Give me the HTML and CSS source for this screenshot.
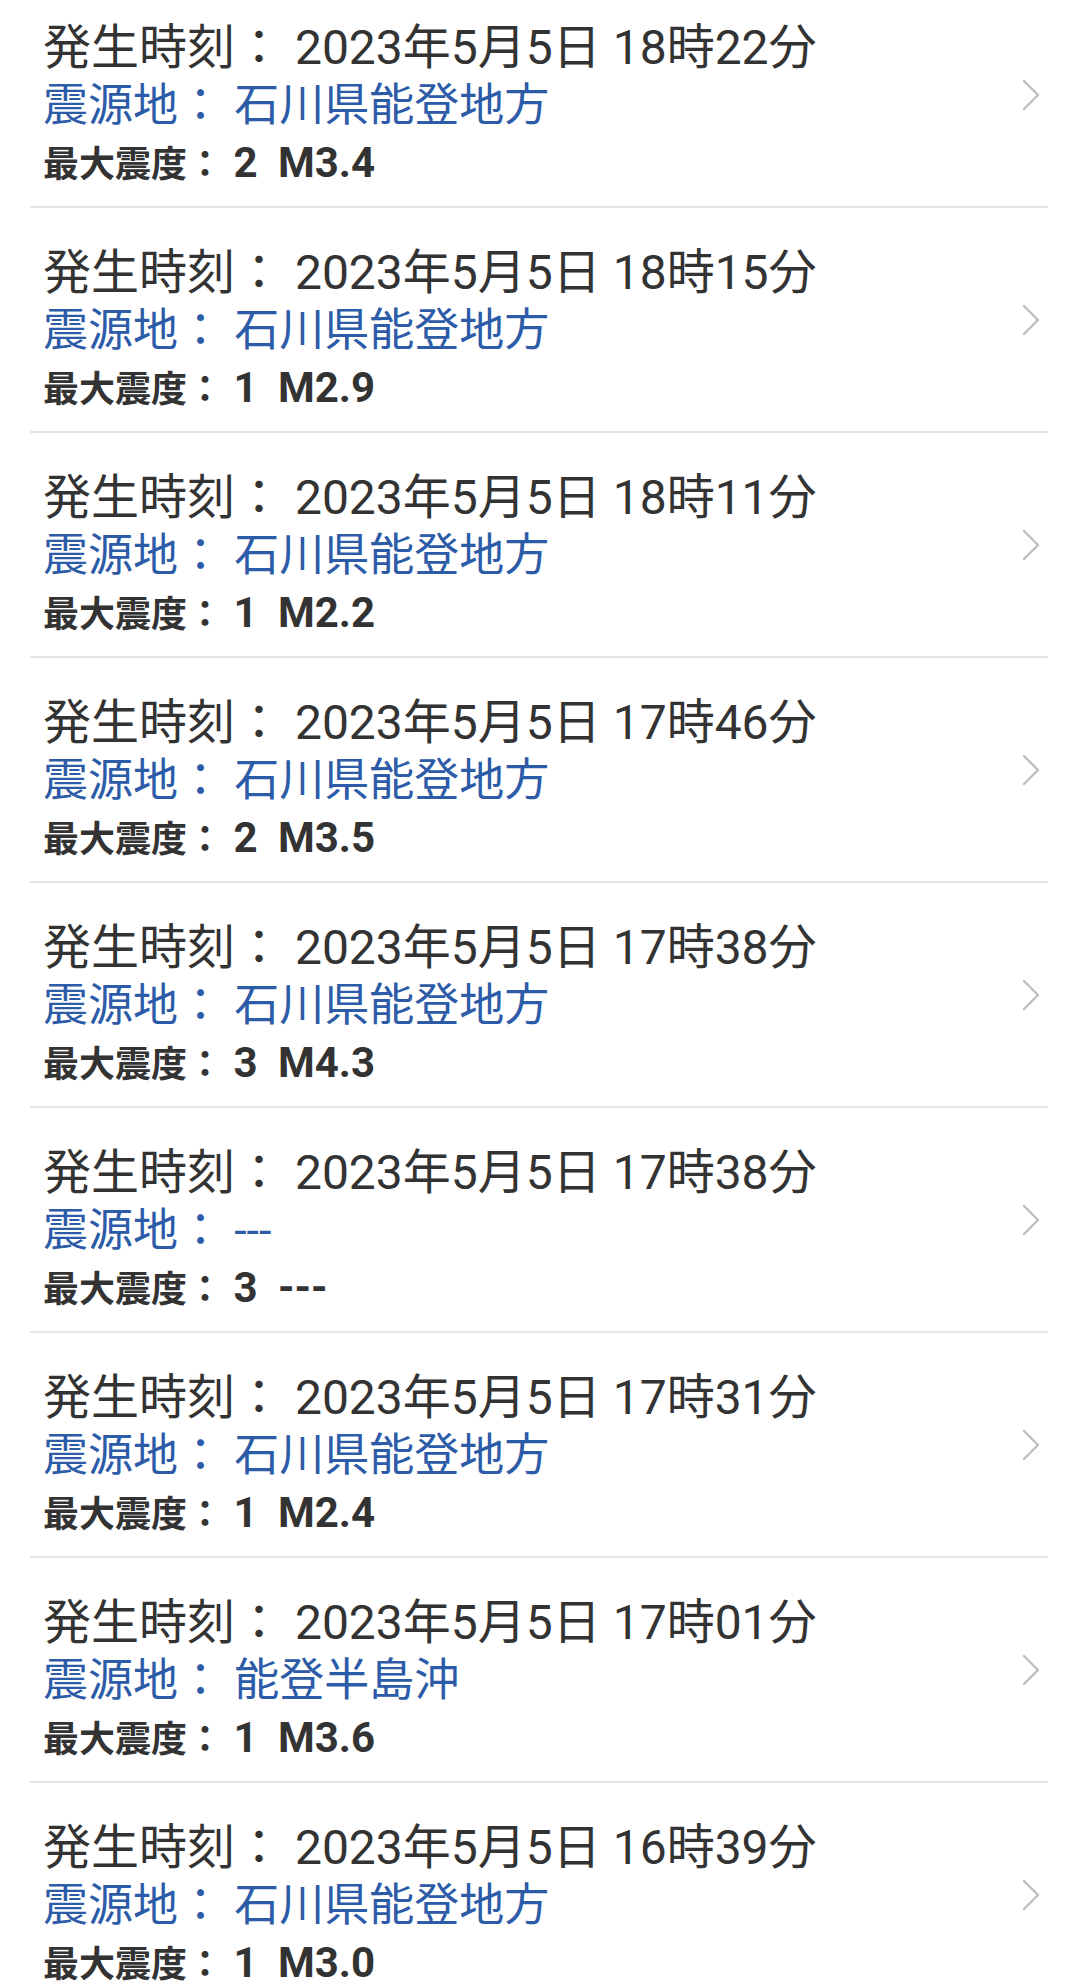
FILE: index.html
```html
<!DOCTYPE html>
<html lang="ja">
<head>
<meta charset="utf-8">
<title>地震情報</title>
<link rel="stylesheet" href="styles.css">
</head>
<body>
<ul class="list">
  <li class="item">
    <div class="info">
      <div class="time">発生時刻： 2023年5月5日 18時22分</div>
      <div class="place">震源地： 石川県能登地方</div>
      <div class="scale"><span class="label">最大震度：</span> 2 <span class="mag">M3.4</span></div>
    </div>
    <svg class="chev" viewBox="0 0 18 32" width="18" height="32"><path d="M2 2 L16 16 L2 30"/></svg>
  </li>
  <li class="item">
    <div class="info">
      <div class="time">発生時刻： 2023年5月5日 18時15分</div>
      <div class="place">震源地： 石川県能登地方</div>
      <div class="scale"><span class="label">最大震度：</span> 1 <span class="mag">M2.9</span></div>
    </div>
    <svg class="chev" viewBox="0 0 18 32" width="18" height="32"><path d="M2 2 L16 16 L2 30"/></svg>
  </li>
  <li class="item">
    <div class="info">
      <div class="time">発生時刻： 2023年5月5日 18時11分</div>
      <div class="place">震源地： 石川県能登地方</div>
      <div class="scale"><span class="label">最大震度：</span> 1 <span class="mag">M2.2</span></div>
    </div>
    <svg class="chev" viewBox="0 0 18 32" width="18" height="32"><path d="M2 2 L16 16 L2 30"/></svg>
  </li>
  <li class="item">
    <div class="info">
      <div class="time">発生時刻： 2023年5月5日 17時46分</div>
      <div class="place">震源地： 石川県能登地方</div>
      <div class="scale"><span class="label">最大震度：</span> 2 <span class="mag">M3.5</span></div>
    </div>
    <svg class="chev" viewBox="0 0 18 32" width="18" height="32"><path d="M2 2 L16 16 L2 30"/></svg>
  </li>
  <li class="item">
    <div class="info">
      <div class="time">発生時刻： 2023年5月5日 17時38分</div>
      <div class="place">震源地： 石川県能登地方</div>
      <div class="scale"><span class="label">最大震度：</span> 3 <span class="mag">M4.3</span></div>
    </div>
    <svg class="chev" viewBox="0 0 18 32" width="18" height="32"><path d="M2 2 L16 16 L2 30"/></svg>
  </li>
  <li class="item">
    <div class="info">
      <div class="time">発生時刻： 2023年5月5日 17時38分</div>
      <div class="place">震源地： ---</div>
      <div class="scale"><span class="label">最大震度：</span> 3 <span class="mag">---</span></div>
    </div>
    <svg class="chev" viewBox="0 0 18 32" width="18" height="32"><path d="M2 2 L16 16 L2 30"/></svg>
  </li>
  <li class="item">
    <div class="info">
      <div class="time">発生時刻： 2023年5月5日 17時31分</div>
      <div class="place">震源地： 石川県能登地方</div>
      <div class="scale"><span class="label">最大震度：</span> 1 <span class="mag">M2.4</span></div>
    </div>
    <svg class="chev" viewBox="0 0 18 32" width="18" height="32"><path d="M2 2 L16 16 L2 30"/></svg>
  </li>
  <li class="item">
    <div class="info">
      <div class="time">発生時刻： 2023年5月5日 17時01分</div>
      <div class="place">震源地： 能登半島沖</div>
      <div class="scale"><span class="label">最大震度：</span> 1 <span class="mag">M3.6</span></div>
    </div>
    <svg class="chev" viewBox="0 0 18 32" width="18" height="32"><path d="M2 2 L16 16 L2 30"/></svg>
  </li>
  <li class="item">
    <div class="info">
      <div class="time">発生時刻： 2023年5月5日 16時39分</div>
      <div class="place">震源地： 石川県能登地方</div>
      <div class="scale"><span class="label">最大震度：</span> 1 <span class="mag">M3.0</span></div>
    </div>
    <svg class="chev" viewBox="0 0 18 32" width="18" height="32"><path d="M2 2 L16 16 L2 30"/></svg>
  </li>
</ul>
</body>
</html>
```

FILE: styles.css
```css
html, body {
  margin: 0;
  padding: 0;
  background: #ffffff;
  height: 1984px;
  overflow: hidden;
}

body {
  font-family: Roboto, "Noto Sans CJK JP", sans-serif;
  color: #333333;
}

.list {
  list-style: none;
  margin: -17px 32px 0 30px;
  padding: 0;
}

.item {
  height: 223px;
  border-bottom: 2px solid #e4e4e4;
  display: flex;
  align-items: center;
  box-sizing: content-box;
}

.info {
  flex: 1;
  padding-left: 13px;
  padding-top: 22px;
  display: flex;
  flex-direction: column;
}

.time {
  font-size: 48px;
  line-height: 57px;
  color: #333333;
  white-space: nowrap;
}

.place {
  font-size: 45px;
  line-height: 60px;
  color: #2c5ba8;
  white-space: nowrap;
}

.scale {
  font-size: 42px;
  line-height: 54px;
  font-weight: 700;
  color: #333333;
  white-space: nowrap;
}

.label {
  font-size: 36px;
}

.mag {
  margin-left: 10px;
}

.chev {
  flex: none;
  margin-right: 8px;
  fill: none;
  stroke: #bdbdbd;
  stroke-width: 2.4;
  stroke-linecap: round;
  stroke-linejoin: round;
}
```
